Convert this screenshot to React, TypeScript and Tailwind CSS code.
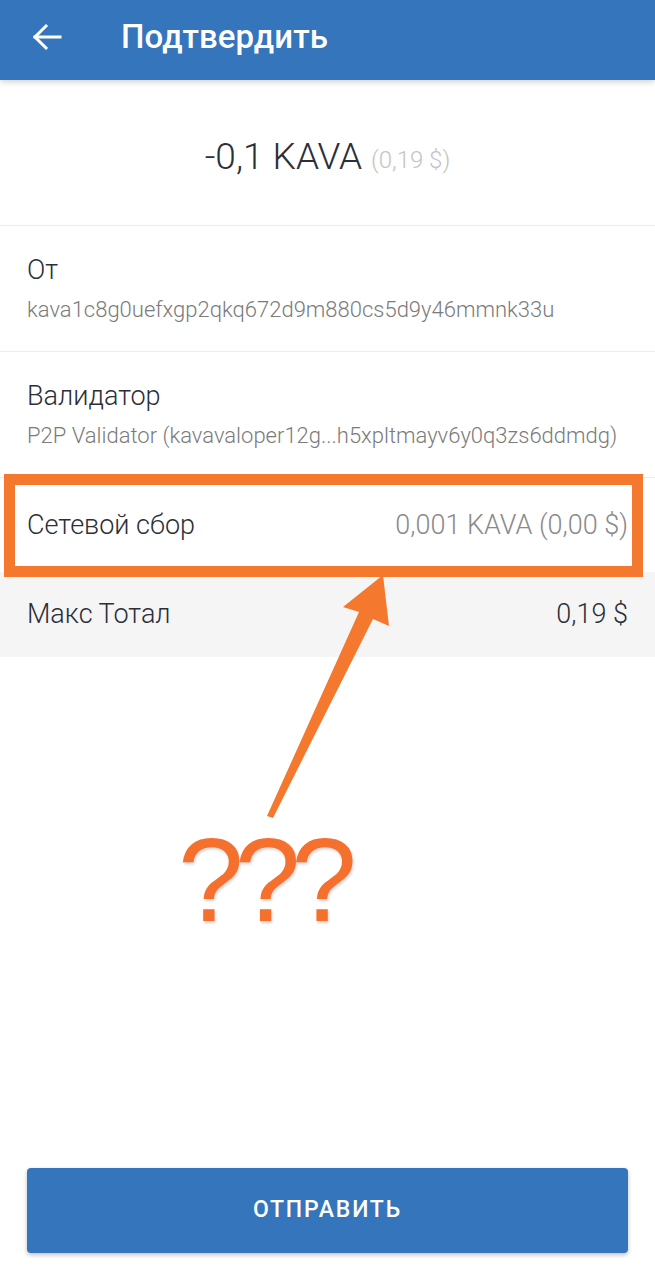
export default function App() {
  return (
    <div className="relative flex h-[1280px] w-full flex-col overflow-hidden bg-white font-['Roboto',sans-serif] font-light text-[#2b2f38]">
      {/* Toolbar */}
      <header className="relative z-10 flex h-20 shrink-0 items-center bg-[#3475bb] pb-[6px] shadow-[0_2px_6px_rgba(0,0,0,0.18)]">
        <div className="flex w-[121px] justify-start pl-[32px]">
          <svg width="30" height="28" viewBox="0 0 30 28" fill="none" stroke="white" strokeWidth="3" strokeLinecap="square">
            <path d="M3 14H28" />
            <path d="M14 3L3 14L14 25" strokeLinejoin="miter" />
          </svg>
        </div>
        <h1 className="text-[33px] font-medium tracking-[0.1px] text-white">Подтвердить</h1>
      </header>

      {/* Amount */}
      <div className="flex h-[146px] items-center justify-center gap-[9px] border-b border-[#ececec] pt-[8px]">
        <span className="text-[37px] text-[#2b2f38]">-0,1 KAVA</span>
        <span className="pt-[7px] text-[24px] text-[#c4c4c4]">(0,19 $)</span>
      </div>

      {/* From */}
      <div className="flex flex-col border-b border-[#ececec] px-[27px] pt-[28px] pb-[27px]">
        <span className="text-[27px] leading-[32px]">От</span>
        <span className="mt-[10px] text-[22px] leading-[28px] text-[#7b7b7b]">kava1c8g0uefxgp2qkq672d9m880cs5d9y46mmnk33u</span>
      </div>

      {/* Validator */}
      <div className="flex flex-col border-b border-[#ececec] px-[27px] pt-[28px] pb-[27px]">
        <span className="text-[27px] leading-[32px]">Валидатор</span>
        <span className="mt-[10px] text-[22px] leading-[28px] text-[#7b7b7b]">P2P Validator (kavavaloper12g...h5xpltmayv6y0q3zs6ddmdg)</span>
      </div>

      {/* Network fee */}
      <div className="flex h-[94px] items-center justify-between px-[27px]">
        <span className="text-[27px]">Сетевой сбор</span>
        <span className="text-[27px] text-[#8a8a8a]">0,001 KAVA (0,00 $)</span>
      </div>

      {/* Max total */}
      <div className="flex h-[85px] items-center justify-between bg-[#f5f5f5] px-[27px]">
        <span className="text-[27px]">Макс Тотал</span>
        <span className="text-[27px] text-[#2b2f38]">0,19 $</span>
      </div>

      {/* Send button */}
      <div className="mt-auto px-[27px] pb-[27px]">
        <button className="flex h-[85px] w-full items-center justify-center rounded-[4px] bg-[#3475bb] text-[23px] font-medium tracking-[1.8px] text-white shadow-[0_2px_4px_rgba(0,0,0,0.25)]">
          ОТПРАВИТЬ
        </button>
      </div>

      {/* Annotation overlay */}
      <div className="pointer-events-none absolute top-[474px] left-[4px] h-[103px] w-[639px] border-[11px] border-[#f5782f]" />
      <svg className="pointer-events-none absolute top-0 left-0" width="655" height="1280" viewBox="0 0 655 1280">
        <polygon points="383,575 389,626 373,619 273,818 267,816 359,612 343,607" fill="#f5782f" />
      </svg>
      <div className="pointer-events-none absolute top-[821px] left-[178px] font-['Liberation_Sans',sans-serif] text-[118px] font-normal leading-none tracking-[-9px] text-[#f4702c] [text-shadow:1px_2px_3px_rgba(0,0,0,0.18)]">
        ???
      </div>
    </div>
  );
}
